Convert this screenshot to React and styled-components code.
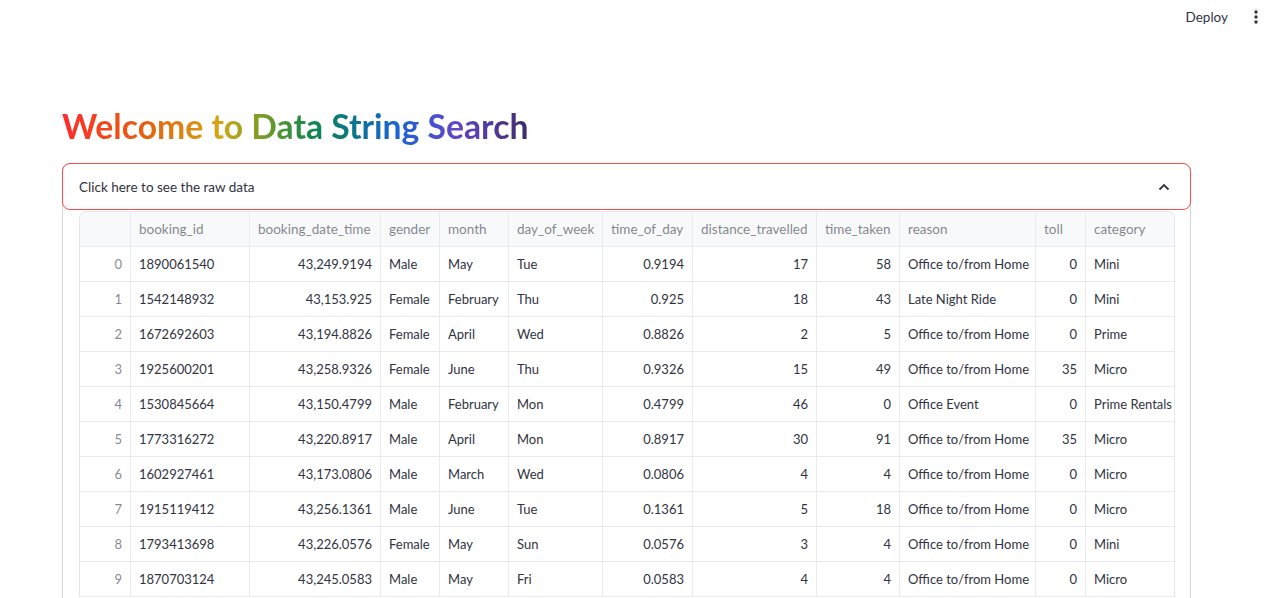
import React from 'react';
import styled, { createGlobalStyle } from 'styled-components';

const GlobalStyle = createGlobalStyle`
  html, body {
    margin: 0;
    padding: 0;
    background: #ffffff;
    font-family: "Lato", "Liberation Sans", sans-serif;
    color: #31333f;
    overflow: hidden;
  }
`;

const Header = styled.header`
  height: 33px;
  display: flex;
  justify-content: flex-end;
  align-items: center;
  padding: 0 13px 0 0;
  gap: 26px;
`;

const DeployButton = styled.button`
  background: none;
  border: none;
  font-family: inherit;
  font-size: 13.5px;
  color: #31333f;
  padding: 0;
  cursor: pointer;
`;

const MenuButton = styled.button`
  background: none;
  border: none;
  padding: 0;
  display: flex;
  align-items: center;
  cursor: pointer;
`;

const Main = styled.main`
  padding: 73px 80px 0 62px;
`;

const Title = styled.h1`
  margin: 0 0 17px 0;
  font-size: 33.7px;
  font-weight: 700;
  line-height: 40px;
  display: inline-block;
  background: linear-gradient(
    to right,
    #ff2b2b 0%,
    #e5620e 18%,
    #d6a514 34%,
    #6e9a2a 44%,
    #138a48 53%,
    #0a7689 62%,
    #1b64d4 72%,
    #6445c6 85%,
    #3d2c6c 100%
  );
  -webkit-background-clip: text;
  background-clip: text;
  color: transparent;
`;

const Expander = styled.div`
  border: 1px solid #d6d6d9;
  border-radius: 8px;
  width: 1127px;
`;

const Summary = styled.div`
  margin: -1px;
  height: 45px;
  border: 1px solid #ff4b4b;
  border-radius: 8px;
  display: flex;
  align-items: center;
  justify-content: space-between;
  padding: 0 20px 0 16px;
  font-size: 13.5px;
  color: #31333f;
`;

const Body = styled.div`
  padding: 2px 16px 16px 16px;
`;

const GridWrap = styled.div`
  width: 1096px;
  border: 1px solid #e6e6ea;
  border-bottom: none;
  border-radius: 8px 8px 0 0;
  overflow: hidden;
  box-sizing: border-box;
`;

const Row = styled.div`
  display: flex;
  height: 35px;
  background: ${(p) => (p.$head ? '#f8f9fb' : '#ffffff')};
  border-bottom: 1px solid #eaeaee;
  box-sizing: border-box;
`;

const Cell = styled.div`
  flex: 0 0 ${(p) => p.$w}px;
  box-sizing: border-box;
  border-right: 1px solid #eaeaee;
  display: flex;
  align-items: center;
  justify-content: ${(p) => (p.$right ? 'flex-end' : 'flex-start')};
  padding: 0 8px;
  font-size: ${(p) => (p.$head ? '13.5px' : '13px')};
  white-space: nowrap;
  overflow: hidden;
  color: ${(p) => (p.$muted ? 'rgba(49, 51, 63, 0.6)' : '#31333f')};
`;

const columns = [
  { key: 'idx', label: '', w: 51, right: true },
  { key: 'booking_id', label: 'booking_id', w: 119 },
  { key: 'booking_date_time', label: 'booking_date_time', w: 131, right: true },
  { key: 'gender', label: 'gender', w: 59 },
  { key: 'month', label: 'month', w: 69 },
  { key: 'day_of_week', label: 'day_of_week', w: 94 },
  { key: 'time_of_day', label: 'time_of_day', w: 90, right: true },
  { key: 'distance_travelled', label: 'distance_travelled', w: 124, right: true },
  { key: 'time_taken', label: 'time_taken', w: 83, right: true },
  { key: 'reason', label: 'reason', w: 136 },
  { key: 'toll', label: 'toll', w: 50, right: true },
  { key: 'category', label: 'category', w: 130 },
];

const data = [
  ['1890061540', '43,249.9194', 'Male', 'May', 'Tue', '0.9194', '17', '58', 'Office to/from Home', '0', 'Mini'],
  ['1542148932', '43,153.925', 'Female', 'February', 'Thu', '0.925', '18', '43', 'Late Night Ride', '0', 'Mini'],
  ['1672692603', '43,194.8826', 'Female', 'April', 'Wed', '0.8826', '2', '5', 'Office to/from Home', '0', 'Prime'],
  ['1925600201', '43,258.9326', 'Female', 'June', 'Thu', '0.9326', '15', '49', 'Office to/from Home', '35', 'Micro'],
  ['1530845664', '43,150.4799', 'Male', 'February', 'Mon', '0.4799', '46', '0', 'Office Event', '0', 'Prime Rentals'],
  ['1773316272', '43,220.8917', 'Male', 'April', 'Mon', '0.8917', '30', '91', 'Office to/from Home', '35', 'Micro'],
  ['1602927461', '43,173.0806', 'Male', 'March', 'Wed', '0.0806', '4', '4', 'Office to/from Home', '0', 'Micro'],
  ['1915119412', '43,256.1361', 'Male', 'June', 'Tue', '0.1361', '5', '18', 'Office to/from Home', '0', 'Micro'],
  ['1793413698', '43,226.0576', 'Female', 'May', 'Sun', '0.0576', '3', '4', 'Office to/from Home', '0', 'Mini'],
  ['1870703124', '43,245.0583', 'Male', 'May', 'Fri', '0.0583', '4', '4', 'Office to/from Home', '0', 'Micro'],
];

function DataGrid() {
  return (
    <GridWrap>
      <Row $head>
        {columns.map((c) => (
          <Cell key={c.key} $w={c.w} $muted $head>
            {c.label}
          </Cell>
        ))}
      </Row>
      {data.map((r, i) => (
        <Row key={i}>
          <Cell $w={columns[0].w} $right $muted>
            {i}
          </Cell>
          {r.map((v, j) => (
            <Cell key={j} $w={columns[j + 1].w} $right={columns[j + 1].right}>
              {v}
            </Cell>
          ))}
        </Row>
      ))}
    </GridWrap>
  );
}

export default function App() {
  return (
    <>
      <GlobalStyle />
      <Header>
        <DeployButton>Deploy</DeployButton>
        <MenuButton>
          <svg width="4" height="14" viewBox="0 0 4 14">
            <circle cx="2" cy="2" r="1.7" fill="#31333f" />
            <circle cx="2" cy="7" r="1.7" fill="#31333f" />
            <circle cx="2" cy="12" r="1.7" fill="#31333f" />
          </svg>
        </MenuButton>
      </Header>
      <Main>
        <Title>Welcome to Data String Search</Title>
        <Expander>
          <Summary>
            <span>Click here to see the raw data</span>
            <svg width="12" height="8" viewBox="0 0 12 8">
              <path d="M1.5 6.5 L6 2 L10.5 6.5" stroke="#31333f" strokeWidth="1.8" fill="none" />
            </svg>
          </Summary>
          <Body>
            <DataGrid />
          </Body>
        </Expander>
      </Main>
    </>
  );
}
